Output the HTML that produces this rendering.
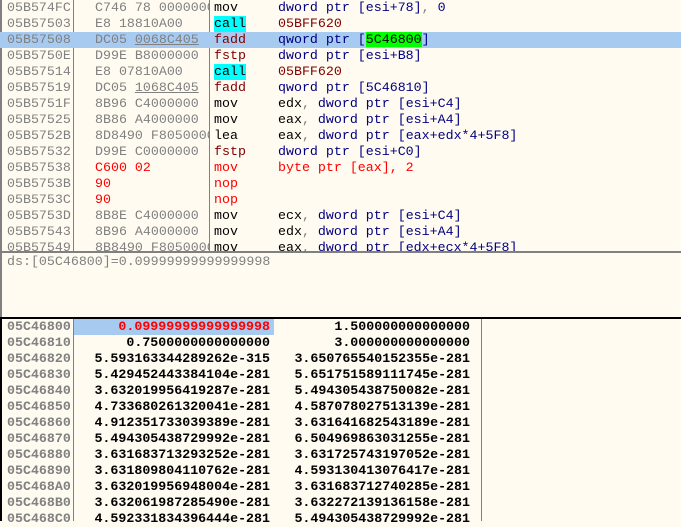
<!DOCTYPE html>
<html><head><meta charset="utf-8"><style>
*{margin:0;padding:0}
body{width:681px;height:521px;background:#fffbf0;position:relative;overflow:hidden;font-family:"Liberation Mono","DejaVu Sans Mono",monospace;font-size:13.3px;line-height:16px}
.r{position:absolute;left:0;width:681px;height:16px;white-space:pre}
.a{position:absolute;left:7px;color:#808080}
.h{position:absolute;left:95px;width:114px;overflow:hidden;color:#808080}
.m{position:absolute;left:214px}
.o{position:absolute;left:278px}
.n{color:#000080}.k{color:#000}.g{color:#808080}.d{color:#800000}.red{color:#ff0000}
.cy{background:#00ffff;color:#000}
.u{text-decoration:underline}
.vl{position:absolute;width:1px;background:#808080}
.v1{position:absolute;right:411px;color:#000;font-weight:bold}
.v2{position:absolute;right:211px;color:#000;font-weight:bold}
.da{position:absolute;left:7px;color:#808080;font-weight:bold}
</style></head><body>
<div style="position:absolute;left:0;top:0;width:2px;height:317px;background:#808080"></div>
<div class="vl" style="left:73px;top:0;height:251px"></div>
<div class="vl" style="left:209px;top:0;height:251px"></div>

<div class="r" style="top:0"><span class="a">05B574FC</span><span class="h">C746 78 00000000</span><span class="m">mov</span><span class="o"><span class="n">dword ptr [esi+78]</span><span class="g">, </span><span class="n">0</span></span></div>
<div class="r" style="top:16px"><span class="a">05B57503</span><span class="h">E8 18810A00</span><span class="m cy">call</span><span class="o d">05BFF620</span></div>
<div class="r" style="top:32px;background:#a6caf0"><span class="a">05B57508</span><span class="h">DC05 <span class="u">0068C405</span></span><span class="m d">fadd</span><span class="o n">qword ptr [<span style="background:#00ff00;color:#000">5C46800</span>]</span></div>
<div class="r" style="top:48px"><span class="a">05B5750E</span><span class="h">D99E B8000000</span><span class="m d">fstp</span><span class="o n">dword ptr [esi+B8]</span></div>
<div class="r" style="top:64px"><span class="a">05B57514</span><span class="h">E8 07810A00</span><span class="m cy">call</span><span class="o d">05BFF620</span></div>
<div class="r" style="top:80px"><span class="a">05B57519</span><span class="h">DC05 <span class="u">1068C405</span></span><span class="m d">fadd</span><span class="o n">qword ptr [5C46810]</span></div>
<div class="r" style="top:96px"><span class="a">05B5751F</span><span class="h">8B96 C4000000</span><span class="m">mov</span><span class="o"><span class="k">edx</span><span class="g">, </span><span class="n">dword ptr [esi+C4]</span></span></div>
<div class="r" style="top:112px"><span class="a">05B57525</span><span class="h">8B86 A4000000</span><span class="m">mov</span><span class="o"><span class="k">eax</span><span class="g">, </span><span class="n">dword ptr [esi+A4]</span></span></div>
<div class="r" style="top:128px"><span class="a">05B5752B</span><span class="h">8D8490 F8050000</span><span class="m">lea</span><span class="o"><span class="k">eax</span><span class="g">, </span><span class="n">dword ptr [eax+edx*4+5F8]</span></span></div>
<div class="r" style="top:144px"><span class="a">05B57532</span><span class="h">D99E C0000000</span><span class="m d">fstp</span><span class="o n">dword ptr [esi+C0]</span></div>
<div class="r" style="top:160px"><span class="a">05B57538</span><span class="h red">C600 02</span><span class="m red">mov</span><span class="o red">byte ptr [eax], 2</span></div>
<div class="r" style="top:176px"><span class="a">05B5753B</span><span class="h red">90</span><span class="m red">nop</span></div>
<div class="r" style="top:192px"><span class="a">05B5753C</span><span class="h red">90</span><span class="m red">nop</span></div>
<div class="r" style="top:208px"><span class="a">05B5753D</span><span class="h">8B8E C4000000</span><span class="m">mov</span><span class="o"><span class="k">ecx</span><span class="g">, </span><span class="n">dword ptr [esi+C4]</span></span></div>
<div class="r" style="top:224px"><span class="a">05B57543</span><span class="h">8B96 A4000000</span><span class="m">mov</span><span class="o"><span class="k">edx</span><span class="g">, </span><span class="n">dword ptr [esi+A4]</span></span></div>
<div class="r" style="top:240px;height:11px;overflow:hidden"><span class="a">05B57549</span><span class="h">8B8490 F8050000</span><span class="m">mov</span><span class="o"><span class="k">eax</span><span class="g">, </span><span class="n">dword ptr [edx+ecx*4+5F8]</span></span></div>

<div style="position:absolute;left:0;top:251px;width:681px;height:2px;background:#808080"></div>
<div class="r" style="top:254px"><span class="a">ds:[05C46800]=0.09999999999999998</span></div>

<div style="position:absolute;left:0;top:317px;width:681px;height:2px;background:#000"></div>
<div style="position:absolute;left:0;top:317px;width:2px;height:204px;background:#000"></div>
<div class="vl" style="left:73px;top:319px;height:202px"></div>
<div class="vl" style="left:481px;top:319px;height:202px"></div>
<div style="position:absolute;left:74px;top:319px;width:200px;height:16px;background:#a6caf0"></div>

<div class="r" style="top:319px"><span class="da">05C46800</span><span class="v1" style="color:#ff0000">0.09999999999999998</span><span class="v2">1.500000000000000</span></div>
<div class="r" style="top:335px"><span class="da">05C46810</span><span class="v1">0.7500000000000000</span><span class="v2">3.000000000000000</span></div>
<div class="r" style="top:351px"><span class="da">05C46820</span><span class="v1">5.593163344289262e-315</span><span class="v2">3.650765540152355e-281</span></div>
<div class="r" style="top:367px"><span class="da">05C46830</span><span class="v1">5.429452443384104e-281</span><span class="v2">5.651751589111745e-281</span></div>
<div class="r" style="top:383px"><span class="da">05C46840</span><span class="v1">3.632019956419287e-281</span><span class="v2">5.494305438750082e-281</span></div>
<div class="r" style="top:399px"><span class="da">05C46850</span><span class="v1">4.733680261320041e-281</span><span class="v2">4.587078027513139e-281</span></div>
<div class="r" style="top:415px"><span class="da">05C46860</span><span class="v1">4.912351733039389e-281</span><span class="v2">3.631641682543189e-281</span></div>
<div class="r" style="top:431px"><span class="da">05C46870</span><span class="v1">5.494305438729992e-281</span><span class="v2">6.504969863031255e-281</span></div>
<div class="r" style="top:447px"><span class="da">05C46880</span><span class="v1">3.631683713293252e-281</span><span class="v2">3.631725743197052e-281</span></div>
<div class="r" style="top:463px"><span class="da">05C46890</span><span class="v1">3.631809804110762e-281</span><span class="v2">4.593130413076417e-281</span></div>
<div class="r" style="top:479px"><span class="da">05C468A0</span><span class="v1">3.632019956948004e-281</span><span class="v2">3.631683712740285e-281</span></div>
<div class="r" style="top:495px"><span class="da">05C468B0</span><span class="v1">3.632061987285490e-281</span><span class="v2">3.632272139136158e-281</span></div>
<div class="r" style="top:511px"><span class="da">05C468C0</span><span class="v1">4.592331834396444e-281</span><span class="v2">5.494305438729992e-281</span></div>
</body></html>
